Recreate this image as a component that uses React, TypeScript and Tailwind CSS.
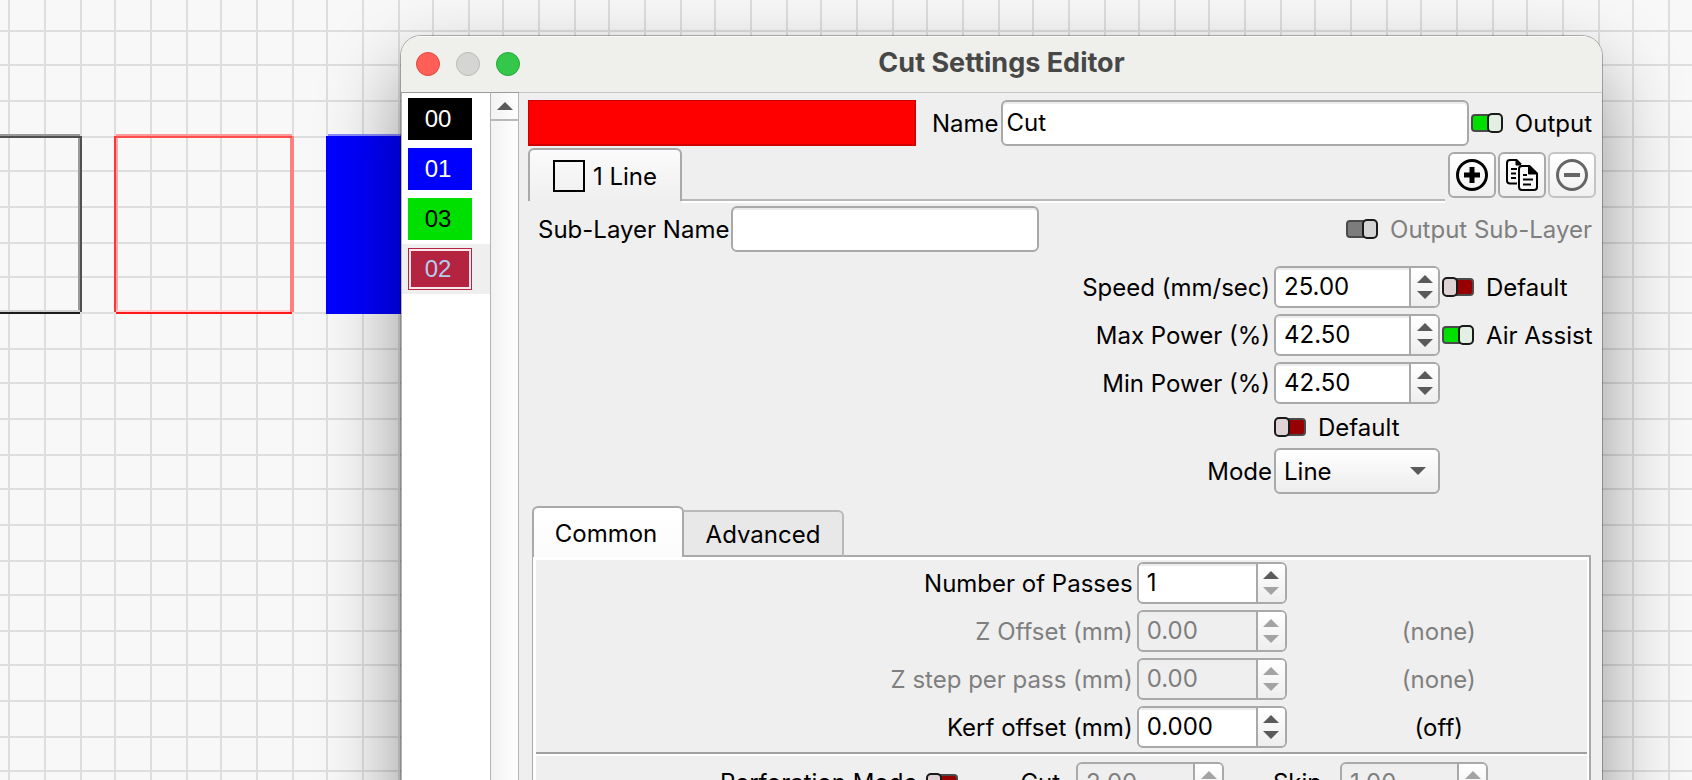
import { useId, useState } from "react";
import type { ReactNode } from "react";

const GRID_STEP = 35.3;

const layers = [
  { id: "00", style: "bg-black text-white" },
  { id: "01", style: "bg-[#0000ff] text-white" },
  { id: "03", style: "bg-[#00e000] text-black" },
  { id: "02", style: "bg-[#b4233f] text-[#b3cdf0]" },
];

// grid lines always start on an even pixel
const snap = (value: number) => 2 * Math.round(value / 2);

function Canvas() {
  const lines = Array.from({ length: 110 }, (_, i) => i);

  return (
    <svg className="absolute inset-0 w-full h-full" aria-hidden="true" shapeRendering="crispEdges">
      <g fill="#dedede">
        {lines.map((i) => (
          <rect key={`v${i}`} x={snap(8.8 + i * GRID_STEP)} y="0" width="2" height="100%" />
        ))}
        {lines.map((i) => (
          <rect key={`h${i}`} x="0" y={snap(29.5 + i * GRID_STEP)} width="100%" height="2" />
        ))}
      </g>
      <g fill="none" strokeWidth="2">
        <path d="M0 135H80" stroke="#999999" />
        <path d="M79 136V312" stroke="#9a9a9a" />
        <path d="M81 136V312" stroke="#505050" />
        <path d="M0 137H80" stroke="#505050" />
        <path d="M0 311H80" stroke="#d0d0d0" />
        <path d="M0 313H80" stroke="#1c1a1c" />
        <path d="M116 135H292" stroke="#ff9a9a" />
        <path d="M117 138V312" stroke="#ffa8a8" />
        <path d="M116 311H292" stroke="#ffd0d0" />
        <path d="M292 136V312" stroke="#ff8080" strokeWidth="4" />
        <path d="M115 136V312" stroke="#ff3434" />
        <path d="M116 137H292" stroke="#ff4c4c" />
        <path d="M116 313H292" stroke="#ff1a1a" />
      </g>
      <rect x="328" y="134" width="176" height="2" fill="#8a8aff" />
      <rect x="326" y="136" width="178" height="178" fill="#0000ff" />
    </svg>
  );
}

function Switch({ id, label, on = false, disabled = false }: { id?: string; label: string; on?: boolean; disabled?: boolean }) {
  const [checked, setChecked] = useState(on);
  const track = disabled ? "#7c7c7c" : checked ? "#00e000" : "#960000";
  const knob = disabled ? "#d4d4d4" : checked ? "#e4efe4" : "#dfd3d5";

  return (
    <span className="relative shrink-0">
      <input
        id={id}
        type="checkbox"
        aria-label={label}
        checked={checked}
        disabled={disabled}
        onChange={() => setChecked(!checked)}
        className="absolute inset-0 w-full h-full opacity-0"
      />
      <svg width="32" height="20" viewBox="0 0 32 20" className="block">
        <g transform={checked ? undefined : "translate(32 0) scale(-1 1)"}>
          <rect x="1" y="2" width="28" height="16" rx="3" fill={track} stroke="#4a4a4a" strokeWidth="2" />
          <rect x="17" y="1" width="14" height="18" rx="4" fill={knob} stroke="#1a1a1a" strokeWidth="2" />
        </g>
      </svg>
    </span>
  );
}

function Toggle({ label, on = false, disabled = false }: { label: string; on?: boolean; disabled?: boolean }) {
  return (
    <label className={`flex items-center gap-3 whitespace-nowrap ${disabled ? "text-[#7f7f7f]" : "text-black"}`}>
      <Switch label={label} on={on} disabled={disabled} />
      <span className="pt-0.5">{label}</span>
    </label>
  );
}

function Arrow({ down = false, dim = false }: { down?: boolean; dim?: boolean }) {
  return (
    <svg width="16" height="8" viewBox="0 0 16 8" className="block">
      <path d={down ? "M0 0H16L8 8Z" : "M0 8H16L8 0Z"} fill={dim ? "#a3a3a3" : "#5a5a5a"} />
    </svg>
  );
}

type SpinnerProps = { id: string; value: string; disabled?: boolean; atMin?: boolean };

function Spinner({ id, value, disabled = false, atMin = false }: SpinnerProps) {
  return (
    <div className={`flex w-full h-[42px] overflow-hidden rounded-md border-2 border-[#a9a9a9] ${disabled ? "bg-[#efefef]" : "bg-white"}`}>
      <input
        id={id}
        type="text"
        defaultValue={value}
        disabled={disabled}
        className={`min-w-0 flex-1 pl-2 shadow-[inset_0_2px_0_#ececec] outline-none ${disabled ? "text-[#7f7f7f]" : "text-black"}`}
      />
      <div className="flex w-[29px] flex-col border-l-2 border-[#a9a9a9] bg-linear-to-b from-white to-[#eeeeee]">
        <button type="button" aria-label="Increase" disabled={disabled} className="flex flex-1 items-end justify-center pb-1">
          <Arrow dim={disabled} />
        </button>
        <button type="button" aria-label="Decrease" disabled={disabled || atMin} className="flex flex-1 items-start justify-center pt-1">
          <Arrow down dim={disabled || atMin} />
        </button>
      </div>
    </div>
  );
}

function SettingRow({ label, value, children }: { label: string; value: string; children?: ReactNode }) {
  const id = useId();

  return (
    <>
      <label htmlFor={id} className="pt-0.5 pr-0.5 text-right whitespace-nowrap">{label}</label>
      <Spinner id={id} value={value} />
      <div>{children}</div>
    </>
  );
}

function CommonRow({ label, note, ...spinner }: { label: string; note?: string; value: string; disabled?: boolean; atMin?: boolean }) {
  const id = useId();
  const color = spinner.disabled ? "text-[#7f7f7f]" : "text-black";

  return (
    <>
      <label htmlFor={id} className={`pt-0.5 pr-1 text-right whitespace-nowrap ${color}`}>{label}</label>
      <Spinner id={id} {...spinner} />
      <span className={`pt-0.5 pl-1 text-center ${color}`}>{note}</span>
    </>
  );
}

function ToolButton({ label, disabled = false, children }: { label: string; disabled?: boolean; children: ReactNode }) {
  return (
    <button
      type="button"
      aria-label={label}
      disabled={disabled}
      className={`flex h-[46px] w-12 items-center justify-center rounded-md border-2 bg-linear-to-b from-white to-[#f0f0f0] ${disabled ? "border-[#c4c4c4]" : "border-[#a9a9a9]"}`}
    >
      {children}
    </button>
  );
}

function LayerList() {
  const [selected, setSelected] = useState("02");

  return (
    <aside className="flex w-[118px] shrink-0 border-r border-l border-[#b4b4b4] bg-white shadow-[0_-1px_0_#9a9a9a]">
      <div className="flex-1 pt-px">
        {layers.map((layer) => (
          <div key={layer.id} className={`flex h-[50px] items-center pl-1.5 ${layer.id === selected ? "bg-[#efefef]" : ""}`}>
            <button
              type="button"
              onClick={() => setSelected(layer.id)}
              className={`h-[42px] w-16 pr-1 pb-px font-['Liberation_Sans',Arial,sans-serif] text-2xl ${layer.style} ${layer.id === selected ? "border border-[#b4233f] shadow-[inset_0_0_0_2px_#f8e8ec]" : ""}`}
            >
              {layer.id}
            </button>
          </div>
        ))}
      </div>
      <div className="w-7 border-l border-[#b4b4b4] bg-linear-to-r from-[#f2f2f2] to-white">
        <button type="button" aria-label="Scroll up" className="flex h-7 w-full items-center justify-center border-b-2 border-[#b8b8b8]">
          <Arrow />
        </button>
      </div>
    </aside>
  );
}

export default function App() {
  const [tab, setTab] = useState("Common");

  return (
    <div className="relative h-screen overflow-hidden bg-[#f8f8f8] pt-9 pr-[90px] pl-[401px] font-[Inter,sans-serif] text-2xl leading-7 text-black">
      <Canvas />

      <div className="relative flex min-h-[900px] flex-col overflow-hidden rounded-[20px] bg-[#efefef] shadow-[0_0_0_1px_rgba(0,0,0,0.28),0_36px_80px_rgba(0,0,0,0.42)]">
        <header className="flex h-[57px] shrink-0 items-center border-b border-[#c8c8c8] bg-[#efefec] px-[15px] shadow-[inset_0_1px_0_#fbfbfb]">
          <div className="flex flex-1 gap-4">
            <button type="button" aria-label="Close" className="size-6 rounded-full border border-[#e2483f] bg-[#ff5f57]" />
            <button type="button" aria-label="Minimize" className="size-6 rounded-full border border-[#b9b9b7] bg-[#d5d5d3]" />
            <button type="button" aria-label="Zoom" className="size-6 rounded-full border border-[#27a93a] bg-[#34c749]" />
          </div>
          <h1 className="pb-0.5 text-[27px] font-bold text-[#474746]">Cut Settings Editor</h1>
          <div className="flex-1" />
        </header>

        <div className="flex flex-1">
          <LayerList />

          <main className="min-w-0 flex-1 pt-[7px] pr-2.5 pl-[9px]">
            <div className="flex items-center">
              <div className="h-[46px] w-[388px] border-2 border-t border-l border-[#d00000] bg-[#ff0000]" />
              <label htmlFor="layer-name" className="pt-0.5 pr-0.5 pl-4">Name</label>
              <input
                id="layer-name"
                type="text"
                defaultValue="Cut"
                className="h-[46px] min-w-0 flex-1 rounded-md border-2 border-[#a9a9a9] bg-white pb-0.5 pl-1 shadow-[inset_0_2px_0_#ececec] outline-none"
              />
              <div className="pl-0.5"><Toggle label="Output" on /></div>
            </div>

            <div className="mt-0.5 -mr-1 flex">
              <div className="flex flex-1">
                <button type="button" className="flex h-[53px] w-[154px] items-center justify-center gap-2 rounded-t-md border-2 border-b-0 border-[#a9a9a9] bg-linear-to-b from-[#fbfbfb] to-[#efefef]">
                  <span className="size-8 border-2 border-black" />
                  <span className="pt-0.5">1 Line</span>
                </button>
                <div className="flex-1 border-b-2 border-[#b8b8b8] shadow-[0_2px_0_#ffffff]" />
              </div>
              <div className="flex gap-0.5 pt-1 pl-[3px]">
                <ToolButton label="Add sub-layer">
                  <svg width="32" height="32" viewBox="0 0 32 32" fill="none" stroke="#000">
                    <circle cx="16" cy="16" r="14.5" strokeWidth="3" />
                    <path d="M8 16H24M16 8V24" strokeWidth="5" />
                  </svg>
                </ToolButton>
                <ToolButton label="Duplicate sub-layer">
                  <svg width="32" height="32" viewBox="0 0 32 32" fill="none" stroke="#000" strokeWidth="2">
                    <path d="M11 24.5H4Q1 24.5 1 21.5V4Q1 1 4 1H10.5L15 5.5" />
                    <path d="M10 1V6H15Z" fill="#000" strokeWidth="1" />
                    <path d="M5 10H11M5 14.5H10M5 19H10" />
                    <path d="M16 7H23.5L31 14.5V28Q31 31 28 31H16Q13 31 13 28V10Q13 7 16 7Z" fill="#fafafa" />
                    <path d="M22.5 7V15H31Z" fill="#000" strokeWidth="1" />
                    <path d="M17 16H21M17 20.5H27M17 25.5H25" />
                  </svg>
                </ToolButton>
                <ToolButton label="Remove sub-layer" disabled>
                  <svg width="32" height="32" viewBox="0 0 32 32" fill="none" stroke="#666">
                    <circle cx="16" cy="16" r="14.5" strokeWidth="3" />
                    <path d="M8 16H24" strokeWidth="4" />
                  </svg>
                </ToolButton>
              </div>
            </div>

            <div className="mt-[5px] flex items-center justify-between pl-2.5">
              <div className="flex items-center gap-0.5">
                <label htmlFor="sub-layer-name" className="pt-0.5 whitespace-nowrap">Sub-Layer Name</label>
                <input
                  id="sub-layer-name"
                  type="text"
                  className="h-[46px] w-[308px] rounded-md border-2 border-[#a9a9a9] bg-white pl-1 shadow-[inset_0_2px_0_#ececec] outline-none"
                />
              </div>
              <Toggle label="Output Sub-Layer" on disabled />
            </div>

            <div className="mt-3.5 grid grid-cols-[auto_166px_150px] items-center justify-end gap-x-0.5 gap-y-1.5">
              <SettingRow label="Speed (mm/sec)" value="25.00">
                <Toggle label="Default" />
              </SettingRow>
              <SettingRow label="Max Power (%)" value="42.50">
                <Toggle label="Air Assist" on />
              </SettingRow>
              <SettingRow label="Min Power (%)" value="42.50" />
              <div className="col-start-2 pt-0.5"><Toggle label="Default" /></div>
              <label htmlFor="mode" className="col-start-1 pt-0.5 text-right">Mode</label>
              <div className="relative">
                <select
                  id="mode"
                  defaultValue="Line"
                  className="h-[46px] w-full appearance-none rounded-md border-2 border-[#a9a9a9] bg-linear-to-b from-white to-[#ededed] pt-0.5 pl-2"
                >
                  <option>Line</option>
                  <option>Fill</option>
                  <option>Offset Fill</option>
                </select>
                <span className="pointer-events-none absolute inset-y-0 right-3.5 flex items-center"><Arrow down /></span>
              </div>
            </div>

            <div className="mt-3 mr-px ml-1">
              <div role="tablist" className="flex items-end">
                {["Common", "Advanced"].map((name) => (
                  <button
                    key={name}
                    type="button"
                    role="tab"
                    aria-selected={tab === name}
                    onClick={() => setTab(name)}
                    className={
                      tab === name
                        ? "h-[51px] w-[152px] rounded-t-md border-2 border-b-0 border-[#a9a9a9] bg-linear-to-b from-white to-[#fbfbfb] pt-0.5 pr-1"
                        : "h-[47px] w-40 rounded-tr-md border-2 border-l-0 border-[#b9b9b9] border-b-[#a9a9a9] bg-[#e8e8e8] pt-0.5"
                    }
                  >
                    {name}
                  </button>
                ))}
                <div className="flex-1 border-b-2 border-[#a9a9a9]" />
              </div>

              <section className="border-r-2 border-l border-[#a9a9a9]">
                <div className="min-h-[280px] border-t-[3px] border-r-2 border-l-[3px] border-white">
                  <div className="grid grid-cols-[2fr_150px_1fr] items-center gap-y-1.5 pt-0.5 pb-1">
                    <CommonRow label="Number of Passes" value="1" atMin />
                    <CommonRow label="Z Offset (mm)" value="0.00" note="(none)" disabled />
                    <CommonRow label="Z step per pass (mm)" value="0.00" note="(none)" disabled />
                    <CommonRow label="Kerf offset (mm)" value="0.000" note="(off)" />
                  </div>
                  <div className="border-t-2 border-b-2 border-t-[#a0a0a0] border-b-white" />
                  <div className="flex items-center pt-1.5 pl-[184px]">
                    <label htmlFor="perforation" className="w-[206px] whitespace-nowrap">Perforation Mode</label>
                    <Switch id="perforation" label="Perforation Mode" />
                    <label htmlFor="perforation-cut" className="w-[118px] pr-4 text-right">Cut</label>
                    <div className="w-[148px]"><Spinner id="perforation-cut" value="2.00" disabled /></div>
                    <label htmlFor="perforation-skip" className="w-[116px] pr-[18px] text-right">Skip</label>
                    <div className="w-[148px]"><Spinner id="perforation-skip" value="1.00" disabled /></div>
                  </div>
                </div>
              </section>
            </div>
          </main>
        </div>
      </div>
    </div>
  );
}
